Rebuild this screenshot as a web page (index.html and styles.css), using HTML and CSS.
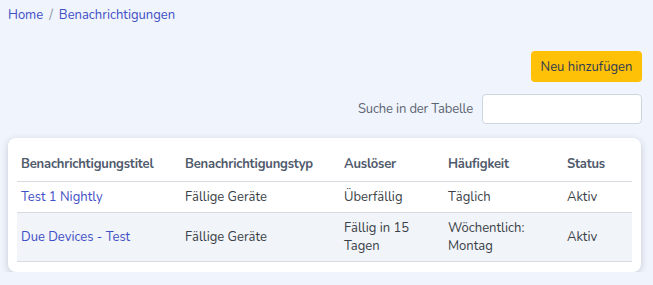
FILE: index.html
```html
<!DOCTYPE html>
<html lang="de">
<head>
<meta charset="utf-8">
<title>Benachrichtigungen</title>
<link rel="stylesheet" href="styles.css">
</head>
<body>
<div class="page">
  <nav class="crumbs">
    <a href="#">Home</a><span class="sep">/</span><a href="#">Benachrichtigungen</a>
  </nav>
  <div class="actions">
    <button class="btn-add">Neu hinzufügen</button>
  </div>
  <div class="search">
    <label for="q">Suche in der Tabelle</label>
    <input id="q" type="text">
  </div>
  <div class="card">
    <table>
      <colgroup>
        <col class="c1"><col class="c2"><col class="c3"><col class="c4"><col class="c5">
      </colgroup>
      <thead>
        <tr><th>Benachrichtigungstitel</th><th>Benachrichtigungstyp</th><th>Auslöser</th><th>Häufigkeit</th><th>Status</th></tr>
      </thead>
      <tbody>
        <tr><td><a href="#">Test 1 Nightly</a></td><td>Fällige Geräte</td><td>Überfällig</td><td>Täglich</td><td>Aktiv</td></tr>
        <tr class="alt"><td><a href="#">Due Devices - Test</a></td><td>Fällige Geräte</td><td>Fällig in 15 Tagen</td><td>Wöchentlich: Montag</td><td>Aktiv</td></tr>
      </tbody>
    </table>
  </div>
</div>
</body>
</html>
```
FILE: styles.css
```css
html, body { margin: 0; padding: 0; }
body {
  background: #f0f4fc;
  font-family: "Nunito", Lato, "Noto Sans", sans-serif;
  font-size: 13px;
  color: #3a3f48;
}
.page { padding: 6px 11px 0 8px; }
a { color: #3f4fc6; text-decoration: none; }
.crumbs { height: 18px; line-height: 18px; }
.crumbs .sep { color: #8a93a2; margin: 0 6px; }
.actions { display: flex; justify-content: flex-end; margin-top: 27px; }
.btn-add {
  background: #ffc107; border: none; border-radius: 4px;
  font: inherit; color: #2f3a52;
  width: 111px; height: 31px; padding: 0;
}
.search { display: flex; justify-content: flex-end; align-items: center; margin-top: 12px; gap: 9px; }
.search label { color: #5c6473; letter-spacing: -0.15px; }
.search input {
  width: 160px; height: 30px; box-sizing: border-box;
  border: 1px solid #cfd5de; border-radius: 4px; background: #fff;
}
.card {
  margin-top: 14px; margin-right: 1px; background: #fff; border-radius: 8px;
  padding: 9px 9px 10px;
  box-shadow: 0 2px 7px rgba(40, 50, 80, 0.22);
}
table { width: 100%; border-collapse: collapse; table-layout: fixed; }
.c1 { width: 164px; } .c2 { width: 159px; } .c3 { width: 104px; } .c4 { width: 119px; } .c5 { width: 69px; }
th {
  text-align: left; font-weight: 700; color: #4f5a6c;
  padding: 8px 4px 8px; line-height: 18px; letter-spacing: -0.2px;
  border-bottom: 1px solid #d8dbe0;
}
td {
  padding: 6px 4px; line-height: 18px; vertical-align: middle;
  border-bottom: 1px solid #d8dbe0;
}
tr.alt td { background: #f1f4f8; }
```
